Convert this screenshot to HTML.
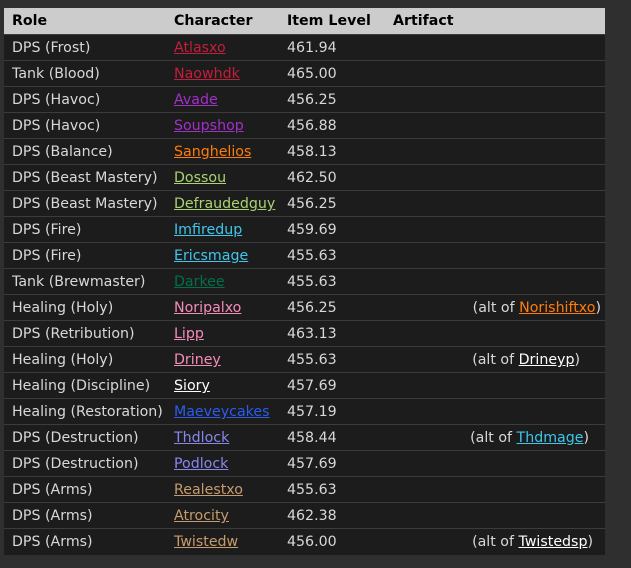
<!DOCTYPE html>
<html><head><meta charset="utf-8"><style>
html,body{margin:0;padding:0;background:#2f2f2f;width:631px;height:568px;overflow:hidden}
table{position:absolute;left:4px;top:8px;width:601px;border-collapse:collapse;font-family:"DejaVu Sans","Liberation Sans",sans-serif;font-size:14.2px;color:#d8d8d8}
th{background:#cccccc;color:#000;text-align:left;font-weight:bold;height:26px;padding:0 0 0 8px;font-size:14.2px}
td{background:#1c1c1c;height:26px;border-top:1px solid #3c3c3c;padding:1px 0 0 8px;white-space:nowrap;box-sizing:border-box}
a{text-decoration:underline}
td.alt{text-align:right;padding-right:4px}
</style></head><body>
<table>
<colgroup><col style="width:162px"><col style="width:113px"><col style="width:106px"><col></colgroup>
<tr><th>Role</th><th>Character</th><th>Item Level</th><th>Artifact</th></tr>
<tr><td>DPS (Frost)</td><td><a style="color:#c41e3a">Atlasxo</a></td><td>461.94</td><td></td></tr>
<tr><td>Tank (Blood)</td><td><a style="color:#c41e3a">Naowhdk</a></td><td>465.00</td><td></td></tr>
<tr><td>DPS (Havoc)</td><td><a style="color:#a330c9">Avade</a></td><td>456.25</td><td></td></tr>
<tr><td>DPS (Havoc)</td><td><a style="color:#a330c9">Soupshop</a></td><td>456.88</td><td></td></tr>
<tr><td>DPS (Balance)</td><td><a style="color:#ff7c0a">Sanghelios</a></td><td>458.13</td><td></td></tr>
<tr><td>DPS (Beast Mastery)</td><td><a style="color:#aad372">Dossou</a></td><td>462.50</td><td></td></tr>
<tr><td>DPS (Beast Mastery)</td><td><a style="color:#aad372">Defraudedguy</a></td><td>456.25</td><td></td></tr>
<tr><td>DPS (Fire)</td><td><a style="color:#3fc7eb">Imfiredup</a></td><td>459.69</td><td></td></tr>
<tr><td>DPS (Fire)</td><td><a style="color:#3fc7eb">Ericsmage</a></td><td>455.63</td><td></td></tr>
<tr><td>Tank (Brewmaster)</td><td><a style="color:#00704a">Darkee</a></td><td>455.63</td><td></td></tr>
<tr><td>Healing (Holy)</td><td><a style="color:#f48cba">Noripalxo</a></td><td>456.25</td><td class="alt">(alt of <a style="color:#ff7c0a">Norishiftxo</a>)</td></tr>
<tr><td>DPS (Retribution)</td><td><a style="color:#f48cba">Lipp</a></td><td>463.13</td><td></td></tr>
<tr><td>Healing (Holy)</td><td><a style="color:#f48cba">Driney</a></td><td>455.63</td><td class="alt" style="padding-right:25px">(alt of <a style="color:#fff">Drineyp</a>)</td></tr>
<tr><td>Healing (Discipline)</td><td><a style="color:#fff">Siory</a></td><td>457.69</td><td></td></tr>
<tr><td>Healing (Restoration)</td><td><a style="color:#2a5cf0">Maeveycakes</a></td><td>457.19</td><td></td></tr>
<tr><td>DPS (Destruction)</td><td><a style="color:#8788ee">Thdlock</a></td><td>458.44</td><td class="alt" style="padding-right:16px">(alt of <a style="color:#3fc7eb">Thdmage</a>)</td></tr>
<tr><td>DPS (Destruction)</td><td><a style="color:#8788ee">Podlock</a></td><td>457.69</td><td></td></tr>
<tr><td>DPS (Arms)</td><td><a style="color:#c69b6d">Realestxo</a></td><td>455.63</td><td></td></tr>
<tr><td>DPS (Arms)</td><td><a style="color:#c69b6d">Atrocity</a></td><td>462.38</td><td></td></tr>
<tr><td>DPS (Arms)</td><td><a style="color:#c69b6d">Twistedw</a></td><td>456.00</td><td class="alt" style="padding-right:12px">(alt of <a style="color:#fff">Twistedsp</a>)</td></tr>
</table>
</body></html>
